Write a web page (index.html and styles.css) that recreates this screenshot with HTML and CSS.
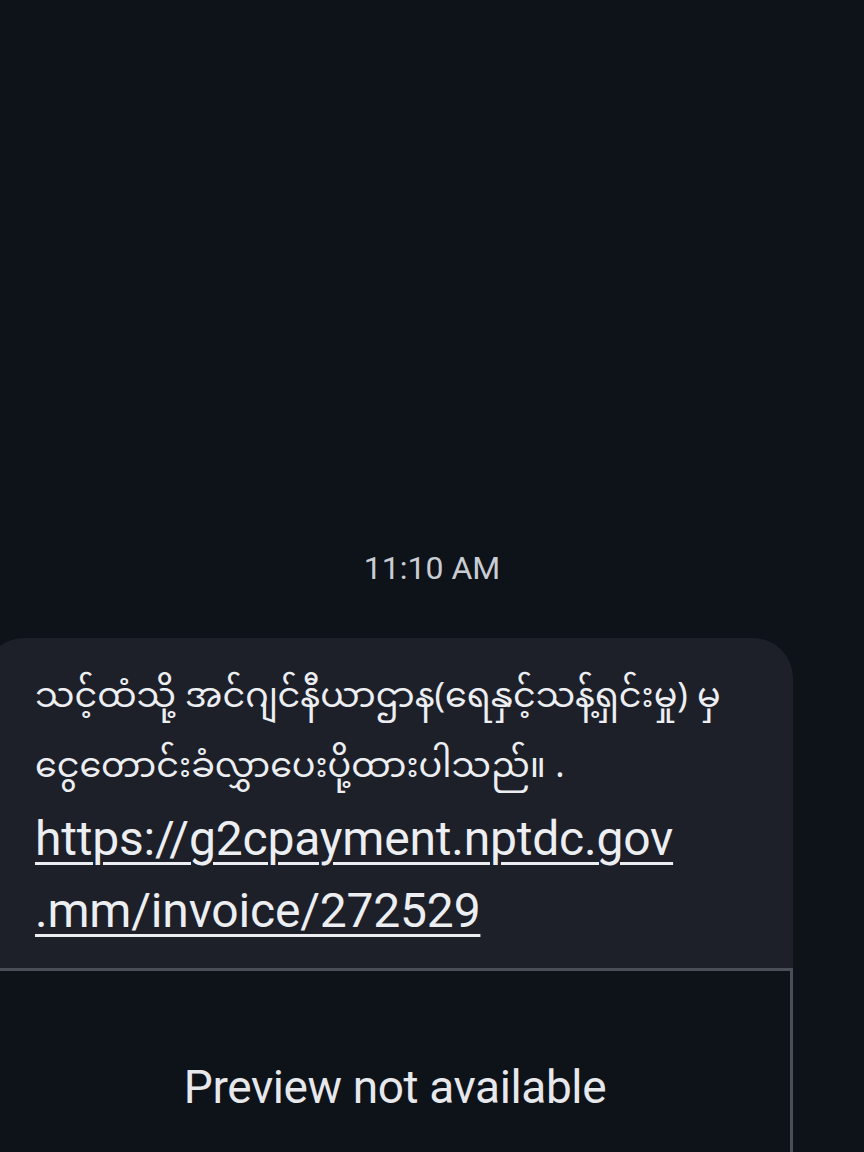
FILE: index.html
```html
<!DOCTYPE html>
<html>
<head>
<meta charset="utf-8">
<link rel="stylesheet" href="styles.css">
</head>
<body>
<div class="screen">
  <div class="time">11:10 AM</div>
  <div class="message">
    <div class="bubble">
      <p class="mm"><span class="mm-line">သင့်ထံသို့ အင်ဂျင်နီယာဌာန(ရေနှင့်သန့်ရှင်းမှု) မှ</span><span class="mm-line">ငွေတောင်းခံလွှာပေးပို့ထားပါသည်။ .</span></p>
      <p class="link"><a href="#">https://g2cpayment.nptdc.gov<br>.mm/invoice/272529</a></p>
    </div>
    <div class="preview">
      <span>Preview not available</span>
    </div>
  </div>
</div>
</body>
</html>
```
FILE: styles.css
```css
html, body {
  margin: 0;
  padding: 0;
  background: #0e1219;
  height: 100%;
  overflow: hidden;
}
.screen {
  display: flex;
  flex-direction: column;
  padding-top: 548px;
  font-family: Roboto, "Noto Sans", sans-serif;
}
.time {
  text-align: center;
  color: #c9ccd3;
  font-size: 32px;
  line-height: 40px;
  margin-bottom: 50px;
}
.message {
  width: 793px;
  display: flex;
  flex-direction: column;
}
.bubble {
  background: #1d2029;
  margin-left: -16px;
  border-radius: 40px 40px 0 0;
  padding: 27px 30px 21px 51px;
}
.mm {
  margin: 0;
  display: flex;
  flex-direction: column;
  gap: 2px;
  color: #eceef2;
  font-family: "Noto Sans Myanmar", Padauk, "Myanmar Text", "Noto Sans", sans-serif;
  font-size: 35px;
  line-height: 68px;
  white-space: nowrap;
}
.mm-line {
  display: block;
  height: 68px;
}
.link {
  margin: 0;
  font-size: 48px;
  line-height: 72px;
  letter-spacing: -0.2px;
}
.link a {
  color: #eceef2;
  text-decoration: underline;
  text-decoration-thickness: 3px;
  text-underline-offset: 7px;
}
.preview {
  border-top: 3px solid #4a4e57;
  border-right: 3px solid #4a4e57;
  height: 260px;
  display: flex;
  justify-content: center;
  padding-top: 89px;
  box-sizing: border-box;
}
.preview span {
  color: #e6e8ec;
  font-size: 46px;
  line-height: 54px;
  letter-spacing: -0.4px;
}
```
